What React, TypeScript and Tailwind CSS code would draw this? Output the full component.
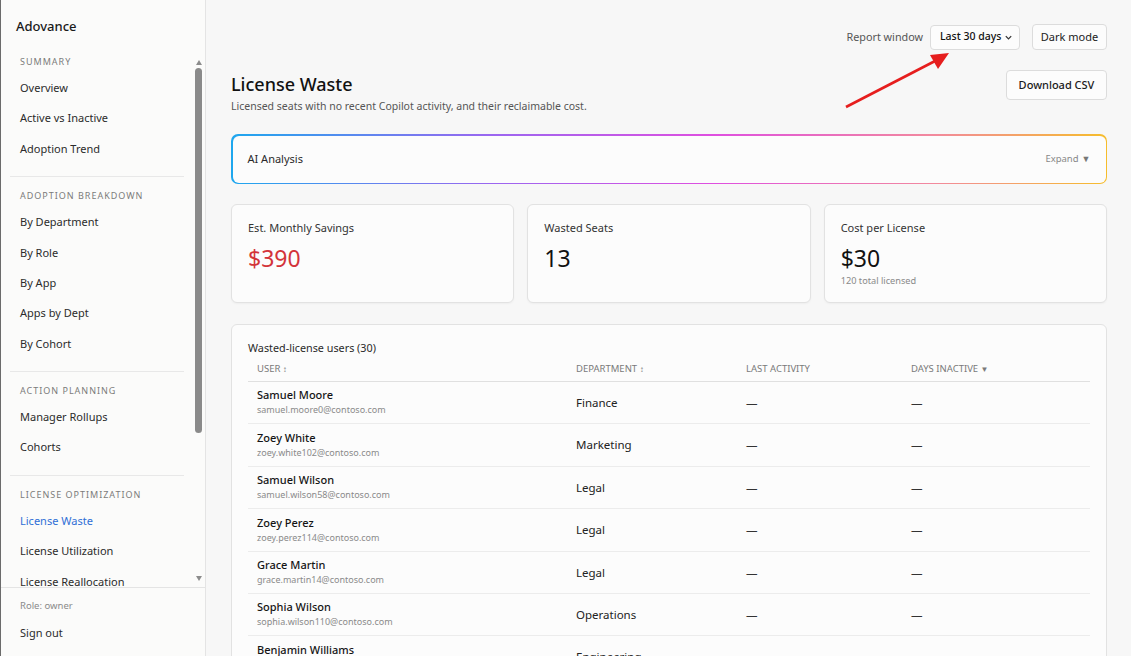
import React from 'react';

const font = { fontFamily: '"Noto Sans", "Open Sans", sans-serif' };

type Section = { title: string; items: string[] };

const sections: Section[] = [
  { title: 'Summary', items: ['Overview', 'Active vs Inactive', 'Adoption Trend'] },
  { title: 'Adoption Breakdown', items: ['By Department', 'By Role', 'By App', 'Apps by Dept', 'By Cohort'] },
  { title: 'Action Planning', items: ['Manager Rollups', 'Cohorts'] },
  { title: 'License Optimization', items: ['License Waste', 'License Utilization', 'License Reallocation'] },
];

const users = [
  { name: 'Samuel Moore', email: 'samuel.moore0@contoso.com', dept: 'Finance' },
  { name: 'Zoey White', email: 'zoey.white102@contoso.com', dept: 'Marketing' },
  { name: 'Samuel Wilson', email: 'samuel.wilson58@contoso.com', dept: 'Legal' },
  { name: 'Zoey Perez', email: 'zoey.perez114@contoso.com', dept: 'Legal' },
  { name: 'Grace Martin', email: 'grace.martin14@contoso.com', dept: 'Legal' },
  { name: 'Sophia Wilson', email: 'sophia.wilson110@contoso.com', dept: 'Operations' },
  { name: 'Benjamin Williams', email: 'benjamin.williams7@contoso.com', dept: 'Engineering' },
];

const Sidebar = () => {
  return (
    <aside className="w-[205px] shrink-0 h-full flex flex-col bg-[#fbfbfa] border-r border-[#e4e4e4]">
      <div className="h-[51px] shrink-0 pt-[3px] pl-[15px] flex items-center text-[13px] font-medium text-[#1a1a1a]">
        Adovance
      </div>

      {/* nav list + scrollbar */}
      <div className="flex-1 min-h-0 flex">
        <nav className="flex-1 min-w-0 overflow-hidden">
          {sections.map((s, i) => (
            <div key={s.title}>
              {i > 0 && <div className="mt-[12px] mx-[9px] h-px bg-[#e8e8e8]" />}
              <div
                className={`h-[22px] flex items-center pl-[19px] text-[9px] uppercase tracking-[0.11em] text-[#7b7b7b] ${
                  i > 0 ? 'mt-[8px]' : ''
                }`}
              >
                {s.title}
              </div>
              {s.items.map((item) => (
                <div
                  key={item}
                  className={`h-[30.4px] flex items-center pl-[19px] text-[11px] ${
                    item === 'License Waste' ? 'text-[#2f6fd6]' : 'text-[#2b2b2b]'
                  }`}
                >
                  {item}
                </div>
              ))}
            </div>
          ))}
        </nav>
        <div className="w-[12px] shrink-0 flex flex-col items-center pt-[9px] pb-[6px] pr-[1px]">
          <div className="w-0 h-0 border-l-[3.5px] border-r-[3.5px] border-b-[5px] border-l-transparent border-r-transparent border-b-[#8c8c8c]" />
          <div className="mt-[3px] w-[7px] h-[365px] rounded-full bg-[#8a8a8a]" />
          <div className="flex-1" />
          <div className="w-0 h-0 border-l-[3.5px] border-r-[3.5px] border-t-[5px] border-l-transparent border-r-transparent border-t-[#8c8c8c]" />
        </div>
      </div>

      <div className="h-[69px] shrink-0 border-t border-[#e4e4e4] pt-[10px] pl-[19px]">
        <div className="h-[16px] flex items-center text-[9.5px] text-[#8a8a8a]">Role: owner</div>
        <div className="mt-[4px] h-[30px] flex items-center text-[11px] text-[#2b2b2b]">Sign out</div>
      </div>
    </aside>
  );
};

const StatCard = ({ label, value, sub, red }: { label: string; value: string; sub?: string; red?: boolean }) => (
  <div className="h-[99px] rounded-[6px] border border-[#e2e2e2] bg-[#fcfcfc] shadow-[0_1px_2px_rgba(0,0,0,0.04)] pt-[15px] px-[16px]">
    <div className="h-[16px] flex items-center text-[11px] text-[#333]">{label}</div>
    <div className={`mt-[7px] h-[30px] flex items-center text-[23px] ${red ? 'text-[#d3343a]' : 'text-[#111]'}`}>
      {value}
    </div>
    {sub && <div className="mt-[1px] h-[14px] flex items-center text-[9.2px] text-[#8a8a8a]">{sub}</div>}
  </div>
);

const App = () => {
  return (
    <div className="relative w-full h-[656px] flex overflow-hidden bg-[#f7f7f7] border-l border-[#6b6b6b]" style={font}>
      <Sidebar />

      <main className="flex-1 min-w-0 h-full overflow-hidden pl-[25px] pr-[24px]">
        {/* top bar */}
        <div className="pt-[24px] flex items-center justify-end">
          <span className="text-[10.8px] text-[#555] mr-[7px]">Report window</span>
          <div className="h-[25px] w-[90px] flex items-center justify-between pl-[9px] pr-[6px] rounded-[4px] border border-[#dcdcdc] bg-[#fcfcfc] text-[10.5px] font-medium text-[#111] whitespace-nowrap">
            Last 30 days
            <svg width="9" height="9" viewBox="0 0 10 10" fill="none" stroke="#333" strokeWidth="1.4">
              <path d="M2 3.5 L5 6.5 L8 3.5" />
            </svg>
          </div>
          <button className="ml-[12px] h-[26px] w-[75px] rounded-[4px] border border-[#dcdcdc] bg-[#fcfcfc] text-[11px] text-[#222]">
            Dark mode
          </button>
        </div>

        {/* heading */}
        <div className="mt-[20px] flex items-start justify-between">
          <div className="pt-[2px]">
            <h1 className="h-[24px] flex items-center text-[18px] font-medium text-[#111]">License Waste</h1>
            <p className="mt-[3px] h-[16px] flex items-center text-[10.5px] text-[#555]">
              Licensed seats with no recent Copilot activity, and their reclaimable cost.
            </p>
          </div>
          <button className="h-[30px] w-[101px] rounded-[4px] border border-[#dcdcdc] bg-[#fcfcfc] text-[11px] font-medium text-[#1a1a1a]">
            Download CSV
          </button>
        </div>

        {/* AI analysis */}
        <div className="mt-[19px] rounded-[7px] p-[1.5px] bg-[linear-gradient(90deg,#1ea7ee,#9c66f0_30%,#df4fe0_55%,#f2899e_80%,#f6bd2c)]">
          <div className="h-[47px] rounded-[6px] bg-[#fcfcfc] flex items-center justify-between pl-[15px] pr-[15px]">
            <span className="text-[11px] text-[#2a2a2a]">AI Analysis</span>
            <span className="flex items-center gap-[3px] text-[9.5px] text-[#888]">
              Expand <span className="text-[9px] text-[#777]">▼</span>
            </span>
          </div>
        </div>

        {/* stats */}
        <div className="mt-[20px] grid grid-cols-3 gap-[13px]">
          <StatCard label="Est. Monthly Savings" value="$390" red />
          <StatCard label="Wasted Seats" value="13" />
          <StatCard label="Cost per License" value="$30" sub="120 total licensed" />
        </div>

        {/* table */}
        <div className="mt-[21px] rounded-[6px] border border-[#e2e2e2] bg-[#fcfcfc] pt-[15px] px-[16px] pb-[10px]">
          <div className="h-[16px] flex items-center text-[10.8px] text-[#2a2a2a]">Wasted-license users (30)</div>
          <div className="mt-[2px] h-[24px] grid grid-cols-[319px_170px_165px_1fr] items-center px-[9px] border-b border-[#e0e0e0] text-[9.5px] uppercase text-[#7a7a7a]">
            <span>User <span className="text-[8px]">↕</span></span>
            <span>Department <span className="text-[8px]">↕</span></span>
            <span>Last Activity</span>
            <span>Days Inactive <span className="text-[8px]">▼</span></span>
          </div>
          {users.map((u) => (
            <div
              key={u.email}
              className="h-[42.4px] grid grid-cols-[319px_170px_165px_1fr] items-center px-[9px] border-b border-[#ececec]"
            >
              <div className="flex flex-col">
                <span className="h-[15px] flex items-center text-[11px] font-medium text-[#151515]">{u.name}</span>
                <span className="h-[14px] flex items-center text-[9px] text-[#8a8a8a]">{u.email}</span>
              </div>
              <span className="text-[11.5px] text-[#222]">{u.dept}</span>
              <span className="text-[11.5px] text-[#333]">—</span>
              <span className="text-[11.5px] text-[#333]">—</span>
            </div>
          ))}
        </div>
      </main>

      {/* annotation arrow */}
      <svg className="absolute inset-0 pointer-events-none" width="1131" height="656">
        <line x1="845" y1="107" x2="936" y2="60" stroke="#e61e1e" strokeWidth="2.6" />
        <polygon points="948,53 929,55 937,69" fill="#e61e1e" />
      </svg>
    </div>
  );
};

export default App;
